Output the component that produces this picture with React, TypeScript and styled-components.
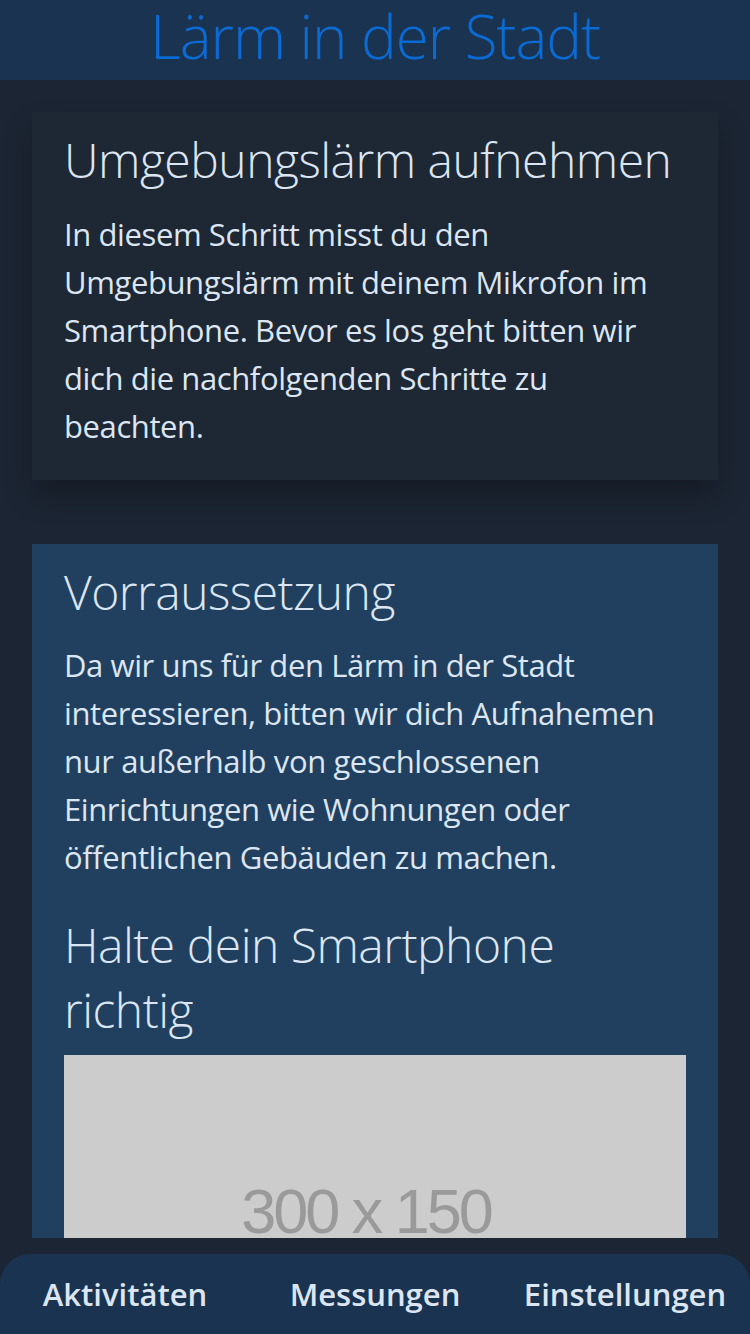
import React from "react";
import styled, { createGlobalStyle } from "styled-components";

const GlobalStyle = createGlobalStyle`
  html, body {
    margin: 0;
    padding: 0;
    height: 100%;
    background: #1c2533;
  }
  #root {
    height: 100%;
  }
  * {
    box-sizing: border-box;
  }
`;

const FONT = `"Open Sans", "Noto Sans", sans-serif`;

const Page = styled.div`
  height: 100vh;
  display: flex;
  flex-direction: column;
  overflow: hidden;
  font-family: ${FONT};
  color: #dce6f2;
`;

const Header = styled.header`
  flex: 0 0 80px;
  background: #1a3350;
  display: flex;
  align-items: center;
  justify-content: center;
  padding-bottom: 8px;
`;

const AppTitle = styled.h1`
  margin: 0;
  font-size: 60px;
  font-weight: 300;
  letter-spacing: -1px;
  color: #0b6bd4;
  line-height: 72px;
`;

const Content = styled.main`
  flex: 1 1 auto;
  min-height: 0;
  overflow: hidden;
  padding: 32px 32px 0;
  margin-bottom: 16px;
  display: flex;
  flex-direction: column;
  gap: 64px;
`;

const Card = styled.section<{ $tone: "dark" | "blue" }>`
  flex: 0 0 auto;
  padding: 19px 32px 30px;
  background: ${(p) => (p.$tone === "blue" ? "#21405f" : "#1e2734")};
  box-shadow: ${(p) =>
    p.$tone === "blue" ? "none" : "0 16px 28px rgba(0, 0, 0, 0.24)"};
`;

const CardTitle = styled.h2`
  margin: 0 0 21px;
  font-size: 48px;
  font-weight: 300;
  line-height: 1.2;
  letter-spacing: -0.5px;
`;

const Text = styled.p`
  margin: 0;
  font-size: 31px;
  font-weight: 400;
  line-height: 48px;
  letter-spacing: -0.4px;
`;

const SubTitle = styled.h3`
  margin: 31px 0 13px;
  font-size: 48px;
  font-weight: 300;
  line-height: 65px;
  letter-spacing: -0.5px;
`;

const Placeholder = styled.div`
  width: 100%;
  aspect-ratio: 2 / 1;
  background: #cccccc;
  display: flex;
  align-items: center;
  justify-content: center;
  padding-right: 18px;
  font-family: "Liberation Sans", Arial, sans-serif;
  font-size: 63px;
  letter-spacing: -3px;
  color: #9a9a9a;
`;

const TabBar = styled.nav`
  flex: 0 0 80px;
  background: #1a3350;
  border-radius: 30px 30px 0 0;
  display: grid;
  grid-template-columns: repeat(3, 1fr);
  align-items: center;
`;

const Tab = styled.div`
  text-align: center;
  font-size: 31px;
  font-weight: 600;
  letter-spacing: 0;
  color: #dce6f2;
`;

export default function App() {
  return (
    <>
      <GlobalStyle />
      <Page>
        <Header>
          <AppTitle>Lärm in der Stadt</AppTitle>
        </Header>
        <Content>
          <Card $tone="dark">
            <CardTitle>Umgebungslärm aufnehmen</CardTitle>
            <Text>
              In diesem Schritt misst du den Umgebungslärm mit deinem Mikrofon
              im Smartphone. Bevor es los geht bitten wir dich die
              nachfolgenden Schritte zu beachten.
            </Text>
          </Card>
          <Card $tone="blue">
            <CardTitle>Vorraussetzung</CardTitle>
            <Text>
              Da wir uns für den Lärm in der Stadt interessieren, bitten wir
              dich Aufnahemen nur außerhalb von geschlossenen Einrichtungen wie
              Wohnungen oder öffentlichen Gebäuden zu machen.
            </Text>
            <SubTitle>Halte dein Smartphone richtig</SubTitle>
            <Placeholder>300 x 150</Placeholder>
          </Card>
        </Content>
        <TabBar>
          <Tab>Aktivitäten</Tab>
          <Tab>Messungen</Tab>
          <Tab>Einstellungen</Tab>
        </TabBar>
      </Page>
    </>
  );
}
